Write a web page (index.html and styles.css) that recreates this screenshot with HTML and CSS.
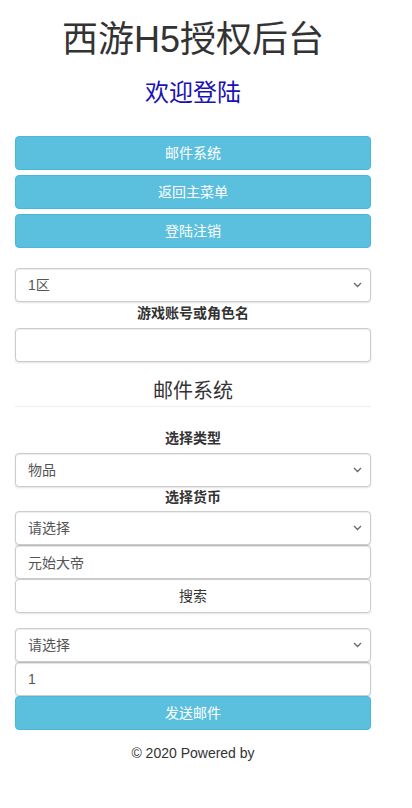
FILE: index.html
```html
<!DOCTYPE html>
<html lang="zh-CN">
<head>
<meta charset="utf-8">
<title>西游H5授权后台</title>
<link rel="stylesheet" href="styles.css">
</head>
<body>
<div class="page">
  <h1 class="title">西游H5授权后台</h1>
  <h3 class="welcome">欢迎登陆</h3>
  <div class="btn-stack">
    <button class="btn btn-info">邮件系统</button>
    <button class="btn btn-info">返回主菜单</button>
    <button class="btn btn-info">登陆注销</button>
  </div>

  <div class="field select-wrap">
    <select class="form-control"><option>1区</option></select>
    <svg class="chev" width="9" height="6" viewBox="0 0 9 6"><path d="M1 1l3.5 3.5L8 1" fill="none" stroke="#666" stroke-width="1.3"/></svg>
  </div>
  <label class="lbl">游戏账号或角色名</label>
  <input class="form-control input-account" type="text" value="">

  <h4 class="section">邮件系统</h4>
  <hr class="rule">

  <label class="lbl lbl-type">选择类型</label>
  <div class="select-wrap">
    <select class="form-control"><option>物品</option></select>
    <svg class="chev" width="9" height="6" viewBox="0 0 9 6"><path d="M1 1l3.5 3.5L8 1" fill="none" stroke="#666" stroke-width="1.3"/></svg>
  </div>
  <label class="lbl lbl-cur">选择货币</label>
  <div class="stack">
    <div class="select-wrap">
      <select class="form-control"><option>请选择</option></select>
      <svg class="chev" width="9" height="6" viewBox="0 0 9 6"><path d="M1 1l3.5 3.5L8 1" fill="none" stroke="#666" stroke-width="1.3"/></svg>
    </div>
    <input class="form-control" type="text" value="元始大帝">
    <button class="btn btn-default">搜索</button>
  </div>
  <div class="stack stack-2">
    <div class="select-wrap">
      <select class="form-control"><option>请选择</option></select>
      <svg class="chev" width="9" height="6" viewBox="0 0 9 6"><path d="M1 1l3.5 3.5L8 1" fill="none" stroke="#666" stroke-width="1.3"/></svg>
    </div>
    <input class="form-control" type="text" value="1">
    <button class="btn btn-info">发送邮件</button>
  </div>

  <footer class="footer">© 2020 Powered by</footer>
</div>
</body>
</html>
```

FILE: styles.css
```css
* { box-sizing: border-box; }

body {
  margin: 0;
  background: #fff;
  color: #333;
  font-family: "Liberation Sans", Arial, "Noto Sans CJK SC", sans-serif;
  font-size: 14px;
  line-height: 1.42857;
}

.page {
  width: 386px;
  padding: 0 15px;
}

.title {
  margin: 20px 0 0;
  font-size: 36px;
  font-weight: 400;
  line-height: 40px;
  text-align: center;
  color: #333;
}

.welcome {
  margin: 20px 0 0;
  font-size: 24px;
  font-weight: 400;
  line-height: 26px;
  text-align: center;
  color: #1a12b4;
}

.btn-stack {
  margin-top: 30px;
  display: flex;
  flex-direction: column;
  gap: 5px;
}

.btn {
  display: block;
  width: 100%;
  height: 34px;
  padding: 6px 12px;
  font-family: inherit;
  font-size: 14px;
  line-height: 20px;
  text-align: center;
  border: 1px solid transparent;
  border-radius: 4px;
  cursor: pointer;
}

.btn-info {
  background: #5bc0de;
  border-color: #46b8da;
  color: #fff;
}

.btn-default {
  background: #fff;
  border-color: #ccc;
  color: #333;
  box-shadow: 0 1px 2px rgba(0,0,0,.1);
}

.field { margin-top: 20px; }

.select-wrap { position: relative; }

.chev {
  position: absolute;
  right: 9px;
  top: 14px;
  pointer-events: none;
}

.form-control {
  display: block;
  width: 100%;
  height: 34px;
  padding: 6px 12px;
  font-family: inherit;
  font-size: 14px;
  line-height: 20px;
  color: #555;
  background: #fff;
  border: 1px solid #ccc;
  border-radius: 4px;
  box-shadow: inset 0 1px 1px rgba(0,0,0,.075), 0 1px 2px rgba(0,0,0,.12);
  outline: none;
}

select.form-control {
  -webkit-appearance: none;
  appearance: none;
}

.lbl {
  display: block;
  margin: 1px 0 0;
  font-weight: 700;
  line-height: 20px;
  text-align: center;
  color: #333;
}

.input-account { margin-top: 5px; }

.section {
  margin: 18px 0 0;
  font-size: 20px;
  font-weight: 400;
  line-height: 22px;
  text-align: center;
  color: #333;
}

.rule {
  margin: 4px 0 0;
  border: 0;
  border-top: 1px solid #eee;
}

.lbl-type { margin-top: 21px; margin-bottom: 5px; }
.lbl-cur { margin-top: 0; margin-bottom: 4px; }

.stack {
  display: flex;
  flex-direction: column;
}

.stack-2 { margin-top: 15px; }

.footer {
  margin-top: 13px;
  line-height: 20px;
  text-align: center;
  color: #333;
}
```
